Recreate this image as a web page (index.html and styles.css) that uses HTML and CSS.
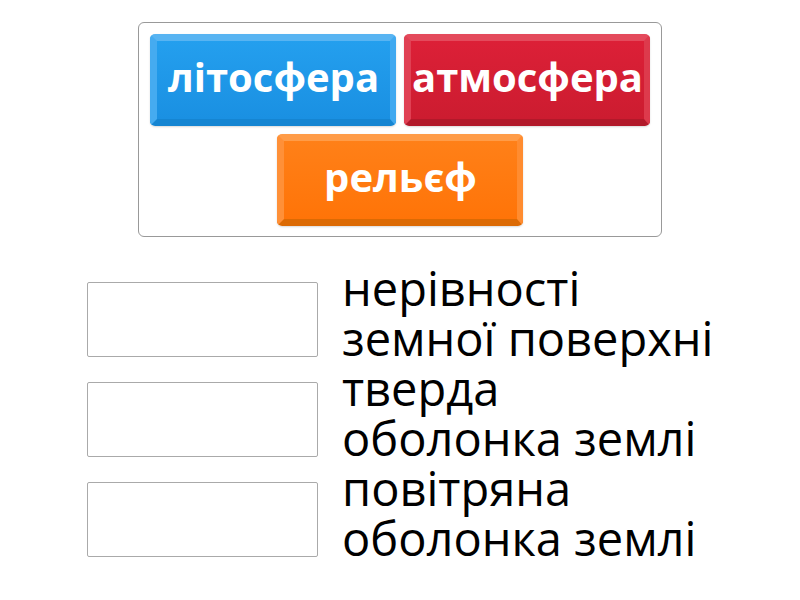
FILE: index.html
```html
<!DOCTYPE html>
<html lang="uk">
<head>
    <meta charset="UTF-8">
    <title>Відповідність</title>
    <link rel="stylesheet" href="styles.css">
</head>
<body>

<div class="page">
    <!-- картки для перетягування -->
    <div class="tiles">
        <div class="tile blue">літосфера</div>
        <div class="tile red">атмосфера</div>
        <div class="tile orange">рельєф</div>
    </div>

    <!-- пари: порожнє місце + визначення -->
    <div class="pairs">
        <div class="pair">
            <div class="slot"></div>
            <div class="definition">нерівності земної поверхні</div>
        </div>
        <div class="pair">
            <div class="slot"></div>
            <div class="definition">тверда оболонка землі</div>
        </div>
        <div class="pair">
            <div class="slot"></div>
            <div class="definition">повітряна оболонка землі</div>
        </div>
    </div>
</div>

</body>
</html>
```

FILE: styles.css
```css
body {
    margin: 0;
    padding: 0;
    background-color: #fff;
    font-family: "Open Sans", "Noto Sans", sans-serif;
}
.page {
    display: flex;
    flex-direction: column;
    align-items: center;
    padding-top: 22px;
}
.tiles {
    width: 502px;
    padding: 11px 10px 10px;
    border: 1px solid #999;
    border-radius: 6px;
    display: flex;
    flex-wrap: wrap;
    justify-content: center;
    gap: 8px;
}
.tile {
    width: 233px;
    height: 72px;
    border: 7px solid;
    border-width: 7px 6px 7px 7px;
    border-radius: 5px;
    color: #fff;
    font-size: 40px;
    font-weight: bold;
    line-height: 1;
    display: flex;
    align-items: center;
    justify-content: center;
    padding-bottom: 6px;
    box-shadow: 0 1px 2px rgba(0, 0, 0, 0.15);
}
.blue {
    background: linear-gradient(#249fee, #1a90e2);
    border-color: #58b4f2 #40a9f0 #1585d2 #45abf0;
}
.red {
    background: linear-gradient(#dc2037, #cc1c30);
    border-color: #e44a5c #dd3a4c #b2192a #e04053;
}
.orange {
    background: linear-gradient(#ff8018, #ff7408);
    border-color: #ff9c48 #ff8c30 #dc6a04 #ff9038;
}
.pairs {
    margin-top: 26px;
    align-self: flex-start;
    margin-left: 87px;
    display: flex;
    flex-direction: column;
}
.pair {
    display: flex;
    align-items: flex-start;
    gap: 24px;
    height: 100px;
}
.slot {
    width: 229px;
    height: 73px;
    margin-top: 19px;
    border: 1px solid #aaa;
    border-radius: 2px;
}
.definition {
    width: 378px;
    font-size: 47px;
    line-height: 50px;
    color: #000;
}
```
